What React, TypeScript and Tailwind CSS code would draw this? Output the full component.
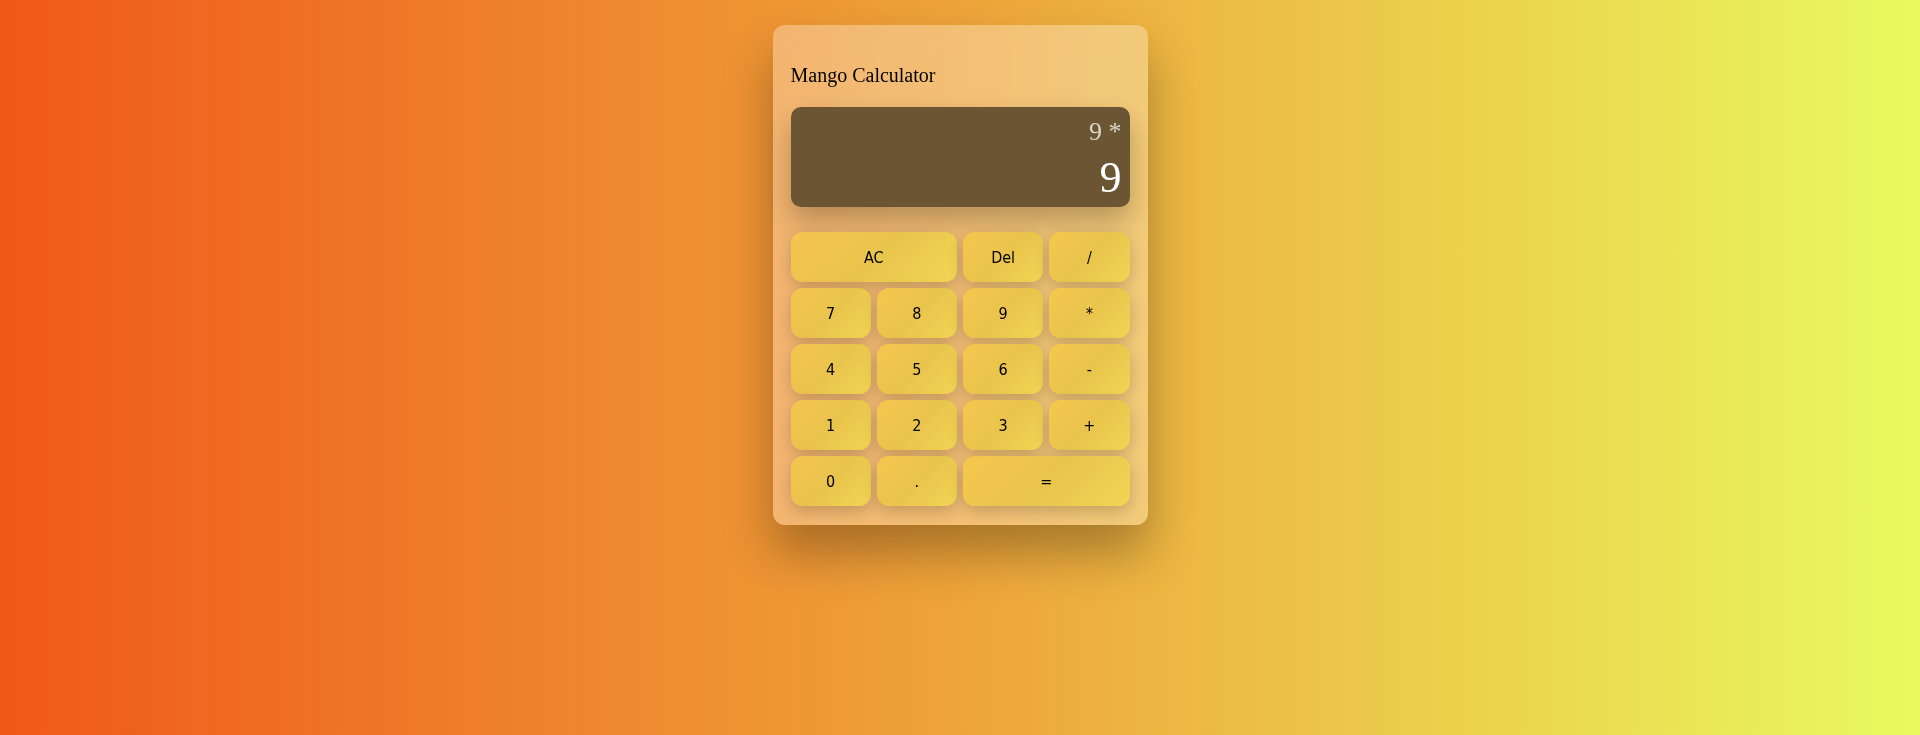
import { useState } from "react";

type Key = { label: string; wide?: boolean };

const keys: Key[] = [
  { label: "AC", wide: true },
  { label: "Del" },
  { label: "/" },
  { label: "7" },
  { label: "8" },
  { label: "9" },
  { label: "*" },
  { label: "4" },
  { label: "5" },
  { label: "6" },
  { label: "-" },
  { label: "1" },
  { label: "2" },
  { label: "3" },
  { label: "+" },
  { label: "0" },
  { label: "." },
  { label: "=", wide: true },
];

export default function App() {
  const [previous] = useState("9 *");
  const [current] = useState("9");

  return (
    <div className="flex min-h-[735px] w-full justify-center bg-[linear-gradient(90deg,#f0581a,#eea43a_50%,#e9fa5e)] pt-[25px]">
      <div className="h-[500px] w-[375px] rounded-[12px] bg-[rgba(255,255,255,0.3)] px-[18px] pt-[38px] pb-[19px] shadow-[0_28px_50px_rgba(0,0,0,0.3)] backdrop-blur-md">
        <h1 className="mb-[20px] font-['Liberation_Serif',serif] text-[20px] leading-[24px] text-black">Mango Calculator</h1>

        <div className="mb-[25px] flex h-[100px] flex-col items-end rounded-[10px] bg-[#6b5532] pt-[10px] pr-[8px] font-['Liberation_Serif',serif] shadow-[0_14px_28px_rgba(0,0,0,0.25)]">
          <div className="text-[26px] leading-[30px] text-[rgba(255,255,255,0.75)]">{previous}</div>
          <div className="mt-[6px] text-[44px] leading-[50px] text-white">{current}</div>
        </div>

        <div className="grid grid-cols-4 gap-[6px]">
          {keys.map((k) => (
            <button
              key={k.label}
              type="button"
              className={`${k.wide ? "col-span-2" : ""} h-[50px] rounded-[12px] bg-[linear-gradient(135deg,rgba(246,199,76,0.95),rgba(232,196,74,0.95)_50%,rgba(242,214,82,0.95))] pt-[2px] font-['DejaVu_Sans_Condensed','DejaVu_Sans',sans-serif] text-[16px] text-black shadow-[0_5px_16px_rgba(0,0,0,0.2)]`}
            >
              {k.label}
            </button>
          ))}
        </div>
      </div>
    </div>
  );
}
